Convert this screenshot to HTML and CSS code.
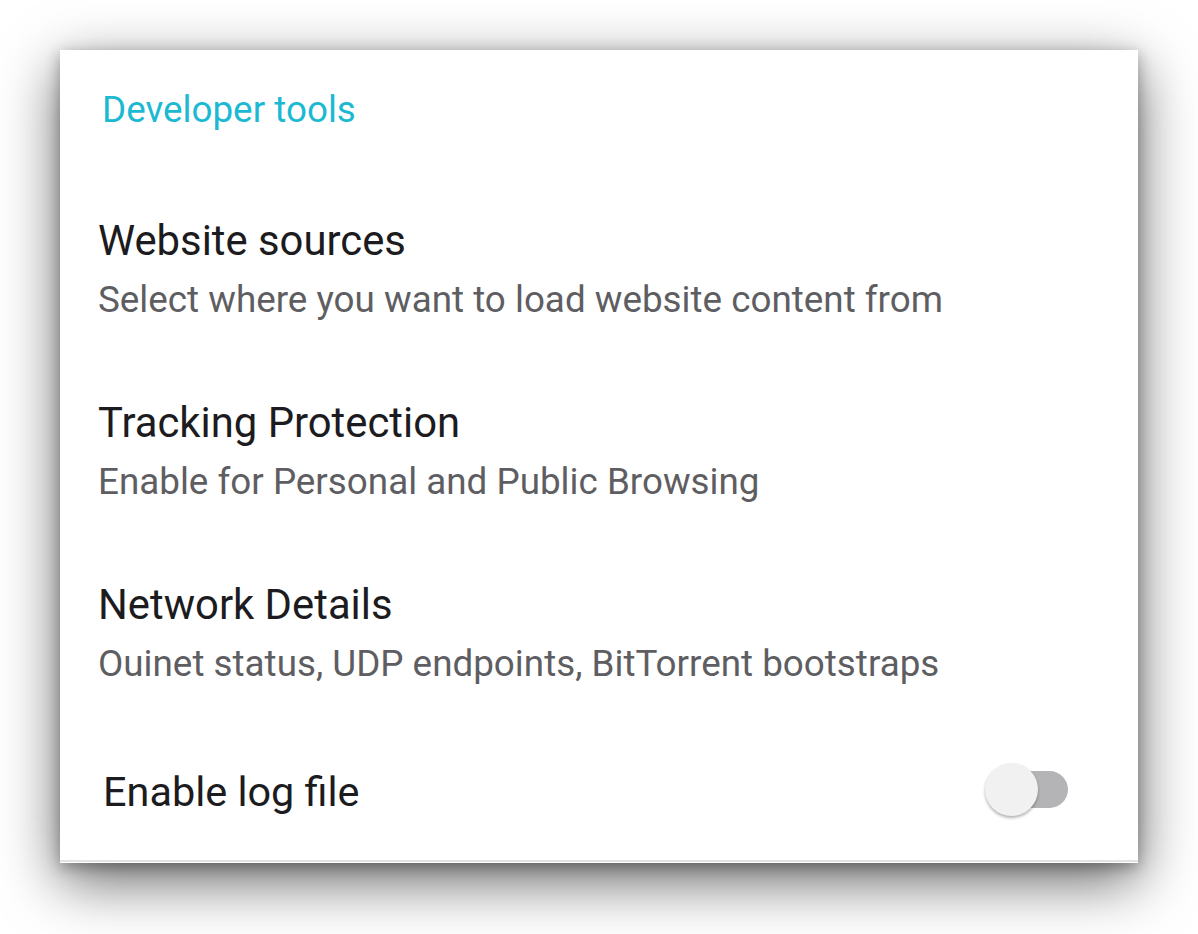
FILE: index.html
```html
<!DOCTYPE html>
<html>
<head>
<meta charset="utf-8">
<link rel="stylesheet" href="styles.css">
</head>
<body>
<div class="card">
  <div class="header">Developer tools</div>
  <div class="item">
    <div class="title">Website sources</div>
    <div class="summary">Select where you want to load website content from</div>
  </div>
  <div class="item">
    <div class="title">Tracking Protection</div>
    <div class="summary">Enable for Personal and Public Browsing</div>
  </div>
  <div class="item">
    <div class="title">Network Details</div>
    <div class="summary">Ouinet status, UDP endpoints, BitTorrent bootstraps</div>
  </div>
  <div class="switch-row">
    <div class="title">Enable log file</div>
    <div class="switch"><div class="track"></div><div class="thumb"></div></div>
  </div>
  <div class="bottom-line"></div>
</div>
</body>
</html>
```
FILE: styles.css
```css
html, body {
  margin: 0;
  padding: 0;
  background: #ffffff;
  font-family: Roboto, "Noto Sans", sans-serif;
}
body {
  padding: 50px 0 71px 60px;
  height: 813px;
  overflow: hidden;
}
.card {
  position: relative;
  width: 1078px;
  height: 813px;
  background: #ffffff;
  box-shadow: 0 18px 55px rgba(0, 0, 0, 0.6), 0 4px 14px rgba(0, 0, 0, 0.3);
  display: flex;
  flex-direction: column;
}
.header {
  color: #1cb9d2;
  font-size: 36.8px;
  line-height: 44px;
  padding: 38px 0 0 42px;
  height: 44px;
  margin-bottom: 84px;
}
.item {
  padding-left: 38px;
  height: 182px;
  flex: none;
}
.title {
  color: #1c1b20;
  font-size: 41.8px;
  line-height: 50px;
}
.summary {
  color: #5e5e62;
  font-size: 36.8px;
  line-height: 44px;
  margin-top: 12px;
}
.switch-row {
  display: flex;
  align-items: center;
  justify-content: space-between;
  padding: 0 70px 0 43px;
  height: 54px;
  flex: none;
}
.switch-row .title {
  font-size: 41.4px;
  padding-top: 5px;
}
.switch {
  position: relative;
  width: 83px;
  height: 53px;
}
.track {
  position: absolute;
  left: 26px;
  top: 8px;
  width: 57px;
  height: 37px;
  border-radius: 19px;
  background: #b4b4b7;
}
.thumb {
  position: absolute;
  left: 0;
  top: 0;
  width: 53px;
  height: 53px;
  border-radius: 50%;
  background: #f1f1f1;
  box-shadow: 0 2px 3px rgba(0, 0, 0, 0.3);
}
.bottom-line {
  margin-top: auto;
  height: 2px;
  background: #e3e3e3;
  border-bottom: 1px solid #ffffff;
}
```
